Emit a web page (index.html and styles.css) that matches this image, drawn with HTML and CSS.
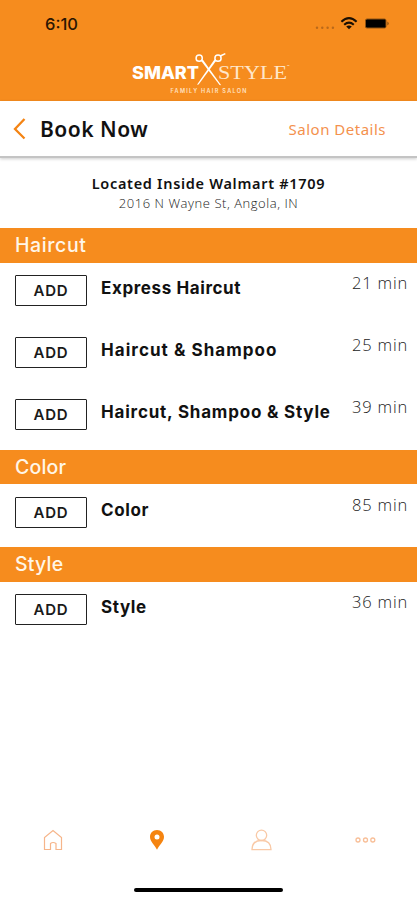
FILE: index.html
```html
<!DOCTYPE html>
<html lang="en">
<head>
    <meta charset="UTF-8">
    <meta name="viewport" content="width=device-width, initial-scale=1.0">
    <title>Book Now</title>
    <link rel="stylesheet" href="styles.css">
</head>
<body>
    <header class="top">
        <div class="status">
            <span class="clock">6:10</span>
            <svg class="status-icons" width="76" height="16" viewBox="0 0 76 16">
                <g fill="#b9691a">
                    <circle cx="2" cy="11.8" r="1.2"/>
                    <circle cx="7.3" cy="11.8" r="1.2"/>
                    <circle cx="12.6" cy="11.8" r="1.2"/>
                    <circle cx="17.9" cy="11.8" r="1.2"/>
                </g>
                <g fill="none" stroke="#1b1003" stroke-width="2.1">
                    <path d="M26.4 5.7Q34 -1.3 41.6 5.7"/>
                    <path d="M29.2 8.7Q34 4.5 38.8 8.7"/>
                </g>
                <path d="M31.2 10.4Q34 8.6 36.8 10.4L34 13.2Z" fill="#1b1003"/>
                <rect x="50.5" y="3" width="20.5" height="9" rx="1.5" fill="#000" stroke="#8f5312"/>
                <path d="M72.3 5.5Q75.3 7.5 72.3 9.5Z" fill="#8f5312"/>
            </svg>
        </div>
        <svg class="logo" width="160" height="46" viewBox="0 0 160 46">
            <text class="logo-smart" x="0" y="26.7" textLength="67" lengthAdjust="spacingAndGlyphs">SMART</text>
            <text class="logo-text" x="86" y="26.7" textLength="69" lengthAdjust="spacingAndGlyphs">STYLE</text>
            <text class="logo-tm" x="155" y="16">™</text>
            <g fill="none" stroke="#fff" stroke-width="1.5">
                <circle cx="67.2" cy="6.2" r="3.1"/>
                <circle cx="86" cy="6.2" r="3.1"/>
                <path d="M88.3 4L93.3 1.6"/>
            </g>
            <path d="M69 8.8L70.8 7.6L89.2 33.2L87.6 33Z" fill="#fff"/>
            <path d="M84.2 8.8L82.4 7.6L65 32.8L66.6 32.6Z" fill="#fff"/>
            <text class="logo-tag" x="38.5" y="41" textLength="76">FAMILY HAIR SALON</text>
        </svg>
    </header>

    <div class="title-bar">
        <svg width="14" height="24" viewBox="0 0 14 24">
            <path d="M11.5 2L2 12L11.5 21.5" fill="none" stroke="#f48414" stroke-width="2.3"/>
        </svg>
        <h1>Book Now</h1>
        <a class="details">Salon Details</a>
    </div>

    <div class="location">
        <div class="place">Located Inside Walmart #1709</div>
        <div class="address">2016 N Wayne St, Angola, IN</div>
    </div>

    <main>
        <h2 class="wide">Haircut</h2>
        <ul class="services">
            <li><button>ADD</button><span class="name">Express Haircut</span><span class="time">21 min</span></li>
            <li><button>ADD</button><span class="name wider">Haircut &amp; Shampoo</span><span class="time">25 min</span></li>
            <li><button>ADD</button><span class="name wide">Haircut, Shampoo &amp; Style</span><span class="time">39 min</span></li>
        </ul>
        <h2>Color</h2>
        <ul class="services">
            <li><button>ADD</button><span class="name">Color</span><span class="time">85 min</span></li>
        </ul>
        <h2>Style</h2>
        <ul class="services">
            <li><button>ADD</button><span class="name">Style</span><span class="time">36 min</span></li>
        </ul>
    </main>

    <nav>
        <svg width="24" height="24" viewBox="0 0 24 24" fill="none" stroke="#f6b58a" stroke-width="1.2">
            <path d="M3.5 21.5V9.5L12 2.5L20.5 9.5V21.5H15V15.5Q12 13.5 9.5 15.5V21.5Z"/>
        </svg>
        <svg width="24" height="24" viewBox="0 0 24 24">
            <path d="M12 1.9C7.8 1.9 5 4.8 5 8.8C5 13.6 9.2 16.5 12 21.7C14.8 16.5 19 13.6 19 8.8C19 4.8 16.2 1.9 12 1.9Z" fill="#f58410"/>
            <circle cx="12" cy="9" r="2.5" fill="#fff"/>
        </svg>
        <svg width="24" height="24" viewBox="0 0 24 24" fill="none" stroke="#f9c9a6" stroke-width="1.3">
            <circle cx="12.5" cy="7.3" r="5.2"/>
            <path d="M12.5 12.5C6 12.5 3 16 3 21.6H22C22 16 19 12.5 12.5 12.5Z"/>
        </svg>
        <svg width="24" height="24" viewBox="0 0 24 24" fill="none" stroke="#f8bf98" stroke-width="1.3">
            <circle cx="5" cy="12" r="2"/>
            <circle cx="12.5" cy="12" r="2"/>
            <circle cx="19.8" cy="12" r="2"/>
        </svg>
    </nav>
    <div class="home-bar"></div>
</body>
</html>
```
FILE: styles.css
```css
* {
    box-sizing: border-box;
}

body {
    margin: 0;
    height: 900px;
    display: flex;
    flex-direction: column;
    overflow: hidden;
    background-color: #fff;
    color: #111;
    font-family: "Noto Sans", sans-serif;
}

.top {
    height: 101px;
    flex: none;
    background-color: #f68c1e;
}

.status {
    height: 48px;
    padding: 0 27px 0 45px;
    display: flex;
    justify-content: space-between;
    align-items: center;
}

.clock {
    font: 500 16.5px Inter, sans-serif;
    color: #2a1603;
}

.status-icons {
    margin-right: -1px;
}

.logo {
    display: block;
    margin: 4px 0 0 132px;
}

.logo text {
    fill: #fff;
}

.logo .logo-smart {
    font: 800 17.5px Inter, sans-serif;
}

.logo .logo-text {
    font: 19px "Liberation Serif", serif;
    fill: #ffe6c9;
}

.logo .logo-tm {
    font: 4px Inter, sans-serif;
}

.logo .logo-tag {
    font: 600 5.5px Inter, sans-serif;
    fill: #ffe3c4;
}

.title-bar {
    height: 57px;
    flex: none;
    display: flex;
    align-items: center;
    padding: 0 31px 0 13px;
    border-bottom: 2px solid #c4c4c4;
    box-shadow: 0 1px 3px rgba(0, 0, 0, 0.2);
}

h1 {
    margin: 0 auto 0 13px;
    font-size: 21px;
    font-weight: 600;
    letter-spacing: 0.5px;
}

.details {
    color: #f4914d;
    font-size: 15px;
    letter-spacing: 0.5px;
}

.location {
    height: 70px;
    flex: none;
    padding-top: 15px;
    text-align: center;
}

.place {
    font-size: 14.5px;
    line-height: 21px;
    font-weight: 600;
    letter-spacing: 0.7px;
}

.address {
    font-family: "Open Sans", sans-serif;
    font-size: 13px;
    line-height: 19px;
    font-weight: 300;
    letter-spacing: 0.55px;
    color: #222;
}

h2 {
    margin: 0;
    height: 34.5px;
    padding-left: 15px;
    background-color: #f68c1e;
    color: #fff6e8;
    font: 500 19.5px/35px Inter, sans-serif;
    letter-spacing: 0.2px;
}

h2.wide {
    letter-spacing: 0.6px;
}

.services {
    margin: 0;
    padding: 0 0 0.5px;
    list-style: none;
}

.services li {
    height: 62.2px;
    padding: 12.5px 10px 0 15px;
    display: flex;
    align-items: flex-start;
}

/* the first group sits a touch lower than the others */
.services li:nth-child(3) {
    height: 62.6px;
}

button {
    width: 72px;
    height: 31px;
    padding: 0;
    border: 1.5px solid #222;
    border-radius: 1px;
    background-color: #fff;
    color: #1a1a1a;
    font: 600 15px Inter, sans-serif;
    letter-spacing: 0.8px;
}

.name {
    margin: 0 auto 0 14px;
    font: 700 17px/26px Inter, sans-serif;
    letter-spacing: 0.6px;
    white-space: nowrap;
}

.name.wide {
    letter-spacing: 0.8px;
}

.name.wider {
    letter-spacing: 1.05px;
}

.time {
    margin-top: -4px;
    font-family: "Open Sans", sans-serif;
    font-size: 16.5px;
    line-height: 24px;
    font-weight: 300;
    letter-spacing: 0.8px;
    margin-right: -1px;
    color: #222;
}

nav {
    margin-top: auto;
    padding: 0 40px 36px 41px;
    display: flex;
    justify-content: space-between;
}

.home-bar {
    width: 149px;
    height: 4px;
    flex: none;
    margin: 0 auto 8px;
    border-radius: 2px;
    background-color: #000;
}
```
